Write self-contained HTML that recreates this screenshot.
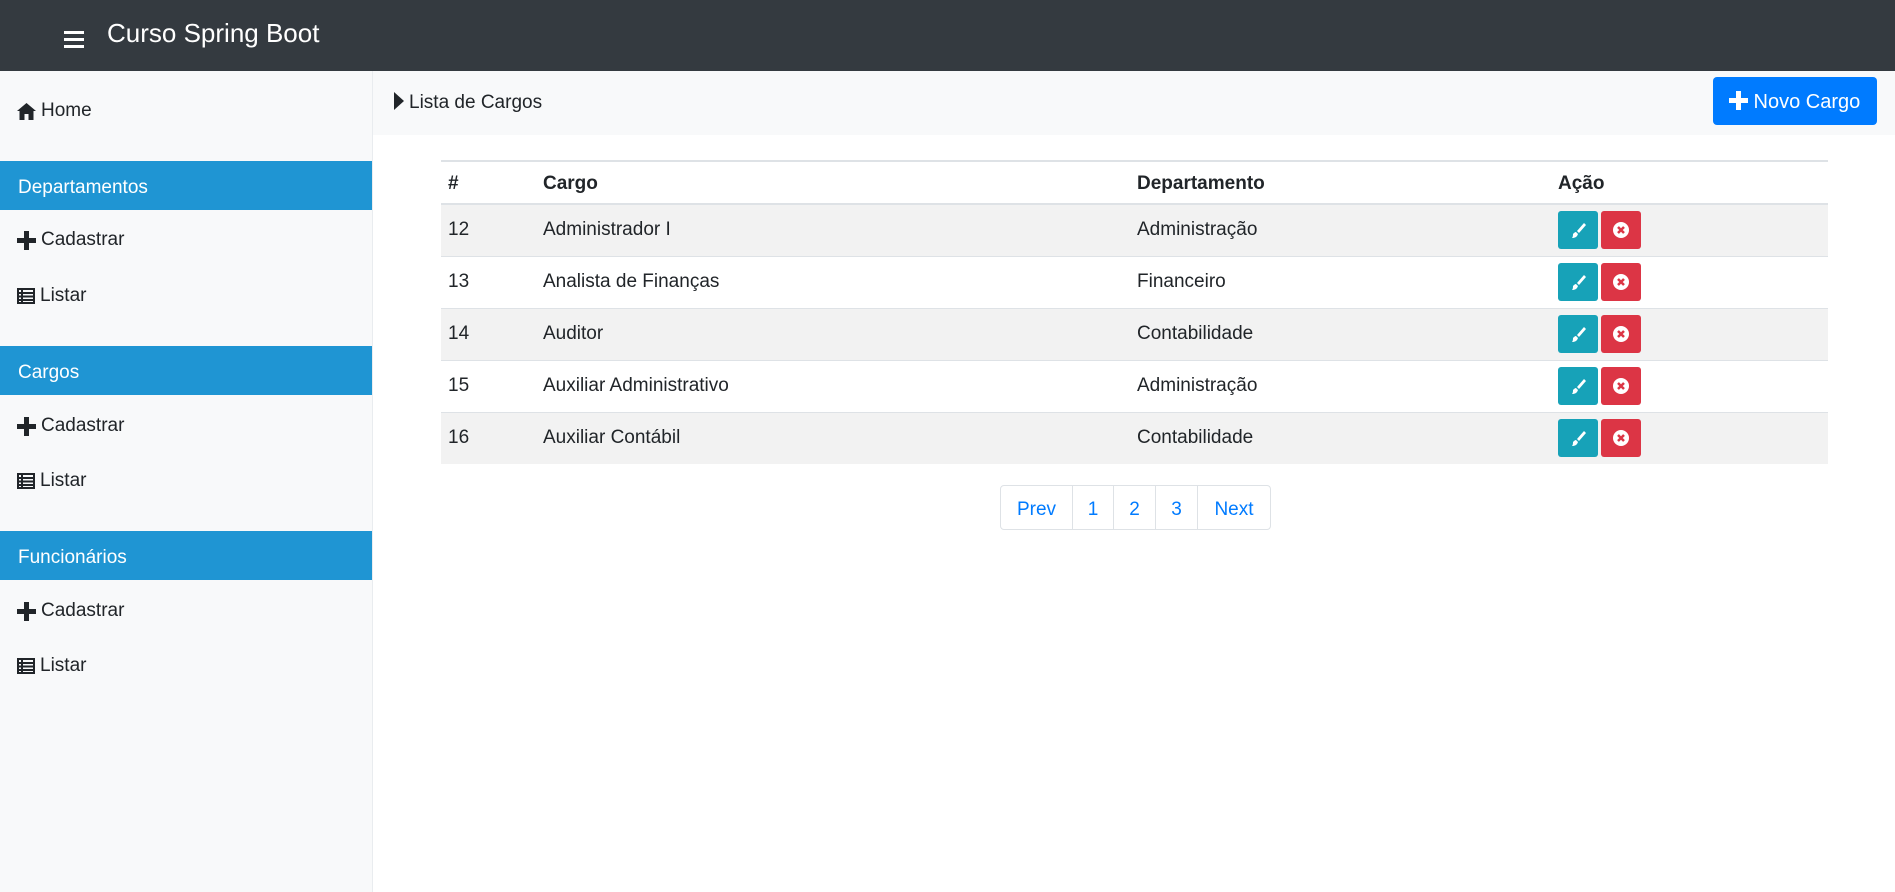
<!DOCTYPE html>
<html><head><meta charset="utf-8"><style>
*{box-sizing:border-box;margin:0;padding:0}
body{width:1895px;height:892px;overflow:hidden;font-family:"Liberation Sans",sans-serif;color:#212529;background:#fff;position:relative;font-size:19px}
.nav{position:absolute;left:0;top:0;width:1895px;height:71px;background:#343a40}
.nav .ham{position:absolute;left:64px;top:31px;width:20px}
.nav .ham i{display:block;height:3px;background:#fff;margin-bottom:4px}
.nav .t{position:absolute;left:107px;top:18px;color:#fff;font-size:26px}
.side{position:absolute;left:0;top:71px;width:373px;height:821px;background:#f8f9fa;border-right:1px solid #e9ecef}
.it{position:absolute;left:17px;font-size:19px;display:flex;align-items:center;gap:5px}
.band{position:absolute;left:0;width:372px;height:49px;background:#1f95d3;color:#fff;padding:16px 0 0 18px;font-size:19px}
.bc{position:absolute;left:373px;top:71px;width:1522px;height:64px;background:#f8f9fa}
.bc span{position:absolute;left:21px;top:21px;font-size:19px}
.tri{display:inline-block;width:0;height:0;border-top:9px solid transparent;border-bottom:9px solid transparent;border-left:10px solid #212529;vertical-align:-2px;margin-right:5px}
.btn{position:absolute;left:1713px;top:77px;width:164px;height:48px;background:#007bff;border-radius:4px;color:#fff;font-size:20px;padding:14px 0 0 16px}
table{position:absolute;left:441px;top:160px;width:1387px;border-collapse:collapse;font-size:19px}
th,td{text-align:left;padding:0 7px;border-top:2px solid #dee2e6}
th{height:43px;font-weight:bold;border-bottom:2px solid #dee2e6;padding-top:2px}
td{height:52px;border-top:1px solid #dee2e6}
tr.s td{background:#f2f2f2}
.b{display:inline-block;width:40px;height:38px;border-radius:3px;vertical-align:middle;margin-right:3px;position:relative}
.e{background:#17a2b8}.d{background:#dc3545}
.pg{position:absolute;left:1000px;top:485px;height:45px;display:flex;border:1px solid #dee2e6;border-radius:4px}
.pg div{color:#007bff;border-left:1px solid #dee2e6;height:43px;padding-top:13px;text-align:center;font-size:19px}
.pg div:first-child{border-left:none}
</style></head><body>
<div class="nav"><div class="ham"><i></i><i></i><i></i></div><div class="t">Curso Spring Boot</div></div>
<div class="side">
<div class="it" style="top:29px"><svg width="19" height="17" viewBox="0 0 19 17"><path d="M9.5 0L0 8h2.5v9h5v-6h4v6h5V8H19z" fill="#212529"/></svg>Home</div>
<div class="band" style="top:90px">Departamentos</div>
<div class="it" style="top:158px"><svg width="19" height="19"><path d="M7 0h5v7h7v5h-7v7H7v-7H0V7h7z" fill="#212529"/></svg>Cadastrar</div>
<div class="it" style="top:214px"><svg width="18" height="16"><rect x="1" y="1" width="16" height="14" fill="none" stroke="#212529" stroke-width="2"/><path d="M1 5h16M1 8.5h16M1 12h16M5 1v14" stroke="#212529" stroke-width="2"/></svg>Listar</div>
<div class="band" style="top:275px">Cargos</div>
<div class="it" style="top:344px"><svg width="19" height="19"><path d="M7 0h5v7h7v5h-7v7H7v-7H0V7h7z" fill="#212529"/></svg>Cadastrar</div>
<div class="it" style="top:399px"><svg width="18" height="16"><rect x="1" y="1" width="16" height="14" fill="none" stroke="#212529" stroke-width="2"/><path d="M1 5h16M1 8.5h16M1 12h16M5 1v14" stroke="#212529" stroke-width="2"/></svg>Listar</div>
<div class="band" style="top:460px">Funcionários</div>
<div class="it" style="top:529px"><svg width="19" height="19"><path d="M7 0h5v7h7v5h-7v7H7v-7H0V7h7z" fill="#212529"/></svg>Cadastrar</div>
<div class="it" style="top:584px"><svg width="18" height="16"><rect x="1" y="1" width="16" height="14" fill="none" stroke="#212529" stroke-width="2"/><path d="M1 5h16M1 8.5h16M1 12h16M5 1v14" stroke="#212529" stroke-width="2"/></svg>Listar</div>
</div>
<div class="bc"><span><i class="tri"></i>Lista de Cargos</span></div>
<div class="btn"><svg width="19" height="19" style="vertical-align:-2px"><path d="M7 0h5v7h7v5h-7v7H7v-7H0V7h7z" fill="#fff"/></svg> Novo Cargo</div>
<table>
<tr><th style="width:95px">#</th><th style="width:594px">Cargo</th><th style="width:421px">Departamento</th><th>Ação</th></tr>
<tr class="s"><td>12</td><td>Administrador I</td><td>Administração</td><td><span class="b e"><svg width="40" height="38"><path d="M26 12l2 2-7 8-2-2z M18 21l2 2c-1 3-3 4-6 4 1-1 1-3 1-4 1-1 2-2 3-2z" fill="#fff"/></svg></span><span class="b d"><svg width="40" height="38"><circle cx="20" cy="19" r="8" fill="#fff"/><path d="M17 16l6 6M23 16l-6 6" stroke="#dc3545" stroke-width="2.5"/></svg></span></td></tr>
<tr><td>13</td><td>Analista de Finanças</td><td>Financeiro</td><td><span class="b e"><svg width="40" height="38"><path d="M26 12l2 2-7 8-2-2z M18 21l2 2c-1 3-3 4-6 4 1-1 1-3 1-4 1-1 2-2 3-2z" fill="#fff"/></svg></span><span class="b d"><svg width="40" height="38"><circle cx="20" cy="19" r="8" fill="#fff"/><path d="M17 16l6 6M23 16l-6 6" stroke="#dc3545" stroke-width="2.5"/></svg></span></td></tr>
<tr class="s"><td>14</td><td>Auditor</td><td>Contabilidade</td><td><span class="b e"><svg width="40" height="38"><path d="M26 12l2 2-7 8-2-2z M18 21l2 2c-1 3-3 4-6 4 1-1 1-3 1-4 1-1 2-2 3-2z" fill="#fff"/></svg></span><span class="b d"><svg width="40" height="38"><circle cx="20" cy="19" r="8" fill="#fff"/><path d="M17 16l6 6M23 16l-6 6" stroke="#dc3545" stroke-width="2.5"/></svg></span></td></tr>
<tr><td>15</td><td>Auxiliar Administrativo</td><td>Administração</td><td><span class="b e"><svg width="40" height="38"><path d="M26 12l2 2-7 8-2-2z M18 21l2 2c-1 3-3 4-6 4 1-1 1-3 1-4 1-1 2-2 3-2z" fill="#fff"/></svg></span><span class="b d"><svg width="40" height="38"><circle cx="20" cy="19" r="8" fill="#fff"/><path d="M17 16l6 6M23 16l-6 6" stroke="#dc3545" stroke-width="2.5"/></svg></span></td></tr>
<tr class="s"><td>16</td><td>Auxiliar Contábil</td><td>Contabilidade</td><td><span class="b e"><svg width="40" height="38"><path d="M26 12l2 2-7 8-2-2z M18 21l2 2c-1 3-3 4-6 4 1-1 1-3 1-4 1-1 2-2 3-2z" fill="#fff"/></svg></span><span class="b d"><svg width="40" height="38"><circle cx="20" cy="19" r="8" fill="#fff"/><path d="M17 16l6 6M23 16l-6 6" stroke="#dc3545" stroke-width="2.5"/></svg></span></td></tr>
</table>
<div class="pg"><div style="width:71px">Prev</div><div style="width:41px">1</div><div style="width:42px">2</div><div style="width:42px">3</div><div style="width:73px">Next</div></div>
</body></html>
